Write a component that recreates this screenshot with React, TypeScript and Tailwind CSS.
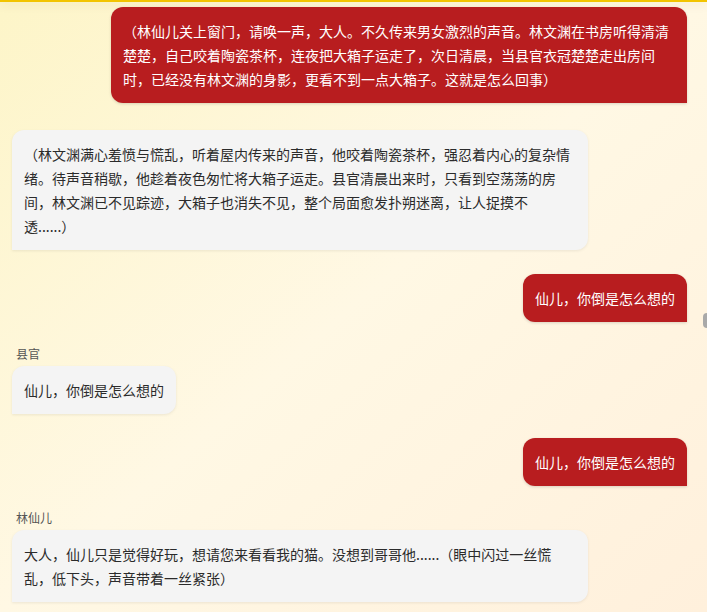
type Message = {
  id: number;
  from: "me" | "other";
  name?: string;
  text: string;
};

const messages: Message[] = [
  {
    id: 1,
    from: "me",
    text: "（林仙儿关上窗门，请唤一声，大人。不久传来男女激烈的声音。林文渊在书房听得清清楚楚，自己咬着陶瓷茶杯，连夜把大箱子运走了，次日清晨，当县官衣冠楚楚走出房间时，已经没有林文渊的身影，更看不到一点大箱子。这就是怎么回事）",
  },
  {
    id: 2,
    from: "other",
    text: "（林文渊满心羞愤与慌乱，听着屋内传来的声音，他咬着陶瓷茶杯，强忍着内心的复杂情绪。待声音稍歇，他趁着夜色匆忙将大箱子运走。县官清晨出来时，只看到空荡荡的房间，林文渊已不见踪迹，大箱子也消失不见，整个局面愈发扑朔迷离，让人捉摸不透......）",
  },
  { id: 3, from: "me", text: "仙儿，你倒是怎么想的" },
  { id: 4, from: "other", name: "县官", text: "仙儿，你倒是怎么想的" },
  { id: 5, from: "me", text: "仙儿，你倒是怎么想的" },
  {
    id: 6,
    from: "other",
    name: "林仙儿",
    text: "大人，仙儿只是觉得好玩，想请您来看看我的猫。没想到哥哥他......（眼中闪过一丝慌乱，低下头，声音带着一丝紧张）",
  },
];

const ChatBubble = ({ from, name, text }: Message) => {
  if (from == "me") {
    return (
      <div className="flex justify-end">
        <div className="max-w-[576px] rounded-xl rounded-br-none bg-[#b81d1f] px-3 py-3 text-[14px] leading-6 text-white shadow-[0_1px_3px_rgba(0,0,0,0.15)] [text-spacing-trim:space-all]">
          {text}
        </div>
      </div>
    );
  }

  return (
    <div className="flex flex-col items-start">
      {name && (
        <span className="mb-1 pl-1 text-[12px] leading-4 text-[#555]">
          {name}
        </span>
      )}
      <div className="max-w-[576px] rounded-xl rounded-bl-none bg-[#f4f4f4] px-3 py-3 text-[14px] leading-6 text-[#2b2b2b] shadow-[0_1px_3px_rgba(0,0,0,0.08)] [text-spacing-trim:space-all]">
        {text}
      </div>
    </div>
  );
};

export default function App() {
  return (
    <div className="relative h-screen overflow-hidden bg-gradient-to-br from-[#fdf5c8] via-[#fff8e4] to-[#fff0dc] font-['Noto_Sans_CJK_SC','Liberation_Sans',sans-serif]">
      <div className="h-[2px] bg-[#f2c400] shadow-[0_2px_10px_rgba(120,100,0,0.18)]" />
      <div className="flex flex-col gap-6 pl-3 pr-5 pt-[5px]">
        {messages.map((m, i) => (
          <div key={m.id} className={i == 1 ? "mt-[3px]" : ""}>
            <ChatBubble {...m} />
          </div>
        ))}
      </div>
      {/* scrollbar thumb */}
      <div className="absolute right-0 top-[313px] h-[15px] w-[4px] rounded-l-sm bg-[#a9a9a9]" />
    </div>
  );
}
